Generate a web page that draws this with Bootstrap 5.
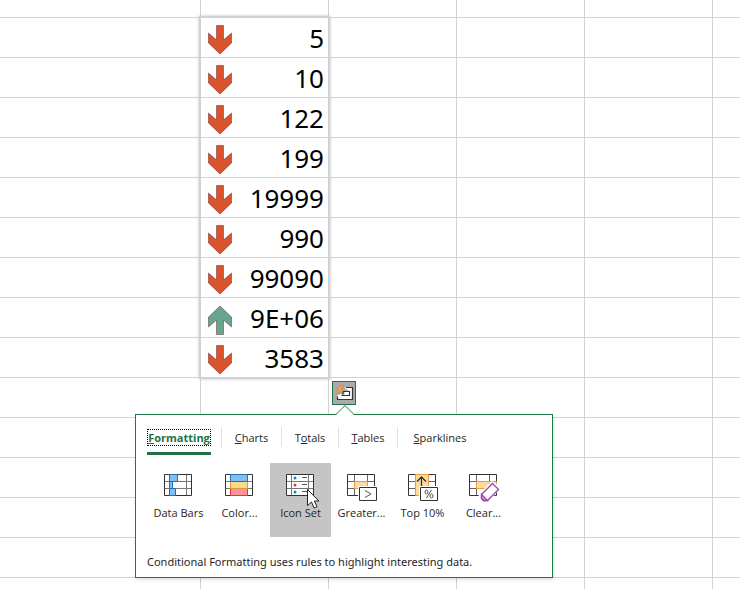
<!DOCTYPE html>
<html lang="en">
<head>
<meta charset="utf-8">
<meta name="viewport" content="width=device-width, initial-scale=1">
<title>Quick Analysis</title>
<link rel="stylesheet" href="https://cdn.jsdelivr.net/npm/bootstrap@5.3.0/dist/css/bootstrap.min.css">
<style>
body{font-family:"Open Sans","Noto Sans",sans-serif;font-size:11px;line-height:16px;color:#262626;background:#fff}
.sheet{table-layout:fixed;border-collapse:separate;border-spacing:0}
.sheet td{height:40px;padding:0;border:solid #d2d2d4;border-width:0 1px 1px 0}
.sheet tr.first-row td{height:18px}
.sheet td:last-child{border-right:0}
.col-a{width:201px}
.col-n{width:128px}
.val{font-family:"Noto Sans",sans-serif;font-size:26px;line-height:35px;color:#000;padding:3px 4px 1px 7px}
.range-box{left:199px;top:16px;width:131px;height:363px;border:2px solid #d0d1d4;box-shadow:0 0 3px #c4c4c8;pointer-events:none}
.qa-btn{left:332px;top:381px;width:24px;height:24px;padding:0;background:#aaa;border:1px solid #217346}
.panel{left:135px;top:414px;width:418px;background:#fff;border:1px solid #1e7a45;box-shadow:1px 2px 3px rgba(0,0,0,.12);padding:12px 11px 7px}
.notch{left:200px;top:-10px}
.tab-btn{background:none;border:0;padding:0;color:#262626;height:22px}
.tab-cell{height:20px;border-right:1px solid #e1e1e1}
.tab-cell:last-child{border-right:0}
.t-form{width:75px}.t-chart{width:60px}.t-total{width:57px}.t-table{width:59px}.t-spark{width:84px}
.tab-btn.current{width:64px;height:28px;padding:2px 0 6px;border-bottom:3px solid #217346;color:#217346;font-weight:700;text-align:center}
.current .focus-box{display:block;height:17px;line-height:18px;outline:1px dotted #000;outline-offset:-1px;white-space:nowrap}
.tiles{margin-top:16px;margin-left:1px}
.tile{width:61px;height:74px;padding:11px 0 0;background:none;border:0;color:#262626;white-space:nowrap}
.tile.hot{background:#c5c5c5}
.tile svg{margin:0 1px 9px 0}
.note{margin-top:17px;font-family:"Noto Sans",sans-serif}
.pointer{left:306px;top:488px}
</style>
<script src="https://cdn.jsdelivr.net/npm/bootstrap@5.3.0/dist/js/bootstrap.bundle.min.js"></script>
</head>
<body>
<svg class="d-none" aria-hidden="true">
<symbol id="arrow" viewBox="0 0 24 30"><path d="M8.500.5h7V15l8-7V18L12 29 .5 18V8l8 7z" fill="currentColor"/><path d="M8.500.5h7V15l8-7V18L12 29 .5 18V8l8 7z" fill="none" stroke="#400" stroke-opacity=".38"/></symbol>
<symbol id="grid" viewBox="0 0 28 22"><path d="M.5.5h27v21H.5z" fill="#fff"/><path d="M1 7.500h26M1 14.500h26M5.500 1v20M22.500 1v20" stroke="#777" fill="none"/><path d="M.5.5h27v21H.5z" fill="none" stroke="#333"/></symbol>
<symbol id="partial" viewBox="0 0 28 22"><path d="M.5.5h27v21H.5z" fill="#fff"/><path d="M1 7.500h26M1 14.500h26M7.500 1v20M20.500 1v20" stroke="#666" fill="none"/><path d="M.5.5h27v21H.5z" fill="none" stroke="#333"/></symbol>
</svg>
<main class="position-relative vh-100 overflow-hidden">
<table class="sheet w-100" aria-label="Worksheet">
<colgroup><col class="col-a"><col class="col-n"><col class="col-n"><col class="col-n"><col class="col-n"><col></colgroup>
<tbody id="rows"></tbody>
</table>
<div class="range-box position-absolute"></div>
<button class="qa-btn position-absolute d-flex" type="button" aria-label="Quick Analysis">
<svg width="22" height="22" viewBox="0 0 22 22"><path d="M11 5.500h8.500v12h-15v-5h7v-3h5" fill="#fff"/><path d="M13 5.500h6.500v12h-15v-3M10 9.500h6.500v4h-8M10 9.500v3" fill="none" stroke="#333" stroke-width="1.200"/><path d="M7 3.500h4L8.500 7H10l-6 6 1.500-4.500H4z" fill="#f7a24b" stroke="#e8812b" stroke-width=".8"/></svg>
</button>
<section class="panel position-absolute" aria-label="Quick Analysis options">
<svg class="notch position-absolute" width="18" height="11" viewBox="0 0 18 11"><path d="M0 10L9 1l9 9v1H0z" fill="#fff"/><path d="M0 9.500L9 .500l9 9" fill="none" stroke="#1e7a45"/></svg>
<div class="d-flex" role="tablist">
<div class="tab-cell t-form"><button class="tab-btn current" role="tab" aria-selected="true" type="button"><span class="focus-box"><u>F</u>ormatting</span></button></div>
<div class="tab-cell t-chart text-center"><button class="tab-btn" role="tab" type="button"><u>C</u>harts</button></div>
<div class="tab-cell t-total text-center"><button class="tab-btn" role="tab" type="button">T<u>o</u>tals</button></div>
<div class="tab-cell t-table text-center"><button class="tab-btn" role="tab" type="button"><u>T</u>ables</button></div>
<div class="tab-cell t-spark text-center"><button class="tab-btn" role="tab" type="button"><u>S</u>parklines</button></div>
</div>
<div class="tiles d-flex">
<button class="tile d-flex flex-column align-items-center" type="button"><svg width="28" height="22" viewBox="0 0 28 22"><use href="#grid" width="28" height="22"/><path d="M5.500.5h8v7h-8zM5.500 7.500h3v7h-3zM5.500 14.500h6v7h-6z" fill="#83beec" stroke="#1e6fb8"/></svg>Data Bars</button>
<button class="tile d-flex flex-column align-items-center" type="button"><svg width="28" height="22" viewBox="0 0 28 22"><use href="#grid" width="28" height="22"/><path d="M5.500 14.500h17v7h-17z" fill="#ff9199" stroke="#e8323c"/><path d="M5.500 7.500h17v7h-17z" fill="#f8db8f" stroke="#e0983a"/><path d="M5.500.5h17v7h-17z" fill="#83beec" stroke="#1e6fb8"/></svg>Color...</button>
<button class="tile hot d-flex flex-column align-items-center" type="button"><svg width="28" height="22" viewBox="0 0 28 22"><use href="#grid" width="28" height="22"/><path d="M16 3.500h5M16 10.500h5M16 17.500h5" stroke="#555"/><circle cx="9" cy="4" r="1.500" fill="#1683d8"/><circle cx="9" cy="11" r="1.500" fill="#e8323c"/><circle cx="9" cy="18" r="1.500" fill="#1683d8"/></svg>Icon Set</button>
<button class="tile d-flex flex-column align-items-center" type="button"><svg class="overflow-visible" width="28" height="22" viewBox="0 0 28 22"><use href="#partial" width="28" height="22"/><path d="M7.500 7.500h13v7h-13z" fill="#fbdc9c" stroke="#ef9a3a"/><path d="M11 12h19v16H11z" fill="#fff"/><path d="M12.500 13.500h17v13h-17z" fill="#fff" stroke="#333"/><path d="M18 16.500l6 3.500-6 3.500" fill="none" stroke="#555"/></svg>Greater...</button>
<button class="tile d-flex flex-column align-items-center" type="button"><svg class="overflow-visible" width="28" height="22" viewBox="0 0 28 22"><use href="#partial" width="28" height="22"/><path d="M7.500.5h13v21h-13z" fill="#fbdc9c" stroke="#ef9a3a"/><path d="M13.500 16V3M9 7.500L13.500 3 18 7.500" fill="none" stroke="#333" stroke-width="1.300"/><path d="M11 12h19v16H11z" fill="#fff"/><path d="M12.500 13.500h17v13h-17z" fill="#fff" stroke="#333"/><path d="M23.500 16l-5 8" stroke="#555"/><ellipse cx="18.500" cy="18" rx="1.500" ry="2" fill="none" stroke="#555"/><ellipse cx="23.500" cy="22" rx="1.500" ry="2" fill="none" stroke="#555"/></svg>Top 10%</button>
<button class="tile d-flex flex-column align-items-center" type="button"><svg class="overflow-visible" width="28" height="22" viewBox="0 0 28 22"><use href="#partial" width="28" height="22"/><path d="M7.500 7.500h20v7h-20z" fill="#fbdc9c" stroke="#ef9a3a"/><path d="M23 7l9 6-13 16H8l2-9z" fill="#fff"/><path d="M23.500 9.500l6 6-11 11h-4l-2-2v-4z" fill="#fff" stroke="#9a42b0" stroke-width="1.300"/><path d="M12.500 20.500l6 6h-4l-2-2z" fill="#d59be0" stroke="#9a42b0" stroke-width="1.300"/></svg>Clear...</button>
</div>
<p class="note mb-0">Conditional Formatting uses rules to highlight interesting data.</p>
</section>
<svg class="pointer position-absolute" width="14" height="22" viewBox="0 0 14 22"><path d="M1.500 1.500v16l4-3.500 2.500 6 3-1.200-2.600-5.800H13z" fill="#fff" stroke="#222"/></svg>
</main>
<script>
const values=['5','10','122','199','19999','990','99090','9E+06','3583'];
const blank='<td></td>';
const rows=['<tr class="first-row">'+blank.repeat(6)+'</tr>'];
for(const v of values){
  const up=v==='9E+06';
  rows.push(`<tr>${blank}<td><div class="val d-flex justify-content-between"><svg width="24" height="30" class="mt-1" color="${up?'#68a591':'#d9532f'}"><use href="#arrow" width="24" height="30"${up?' transform="rotate(180 12 15)"':''}/></svg><span>${v}</span></div></td>${blank.repeat(4)}</tr>`);
}
for(let i=0;i<6;i++)rows.push('<tr>'+blank.repeat(6)+'</tr>');
document.getElementById('rows').innerHTML=rows.join('');
</script>
</body>
</html>
